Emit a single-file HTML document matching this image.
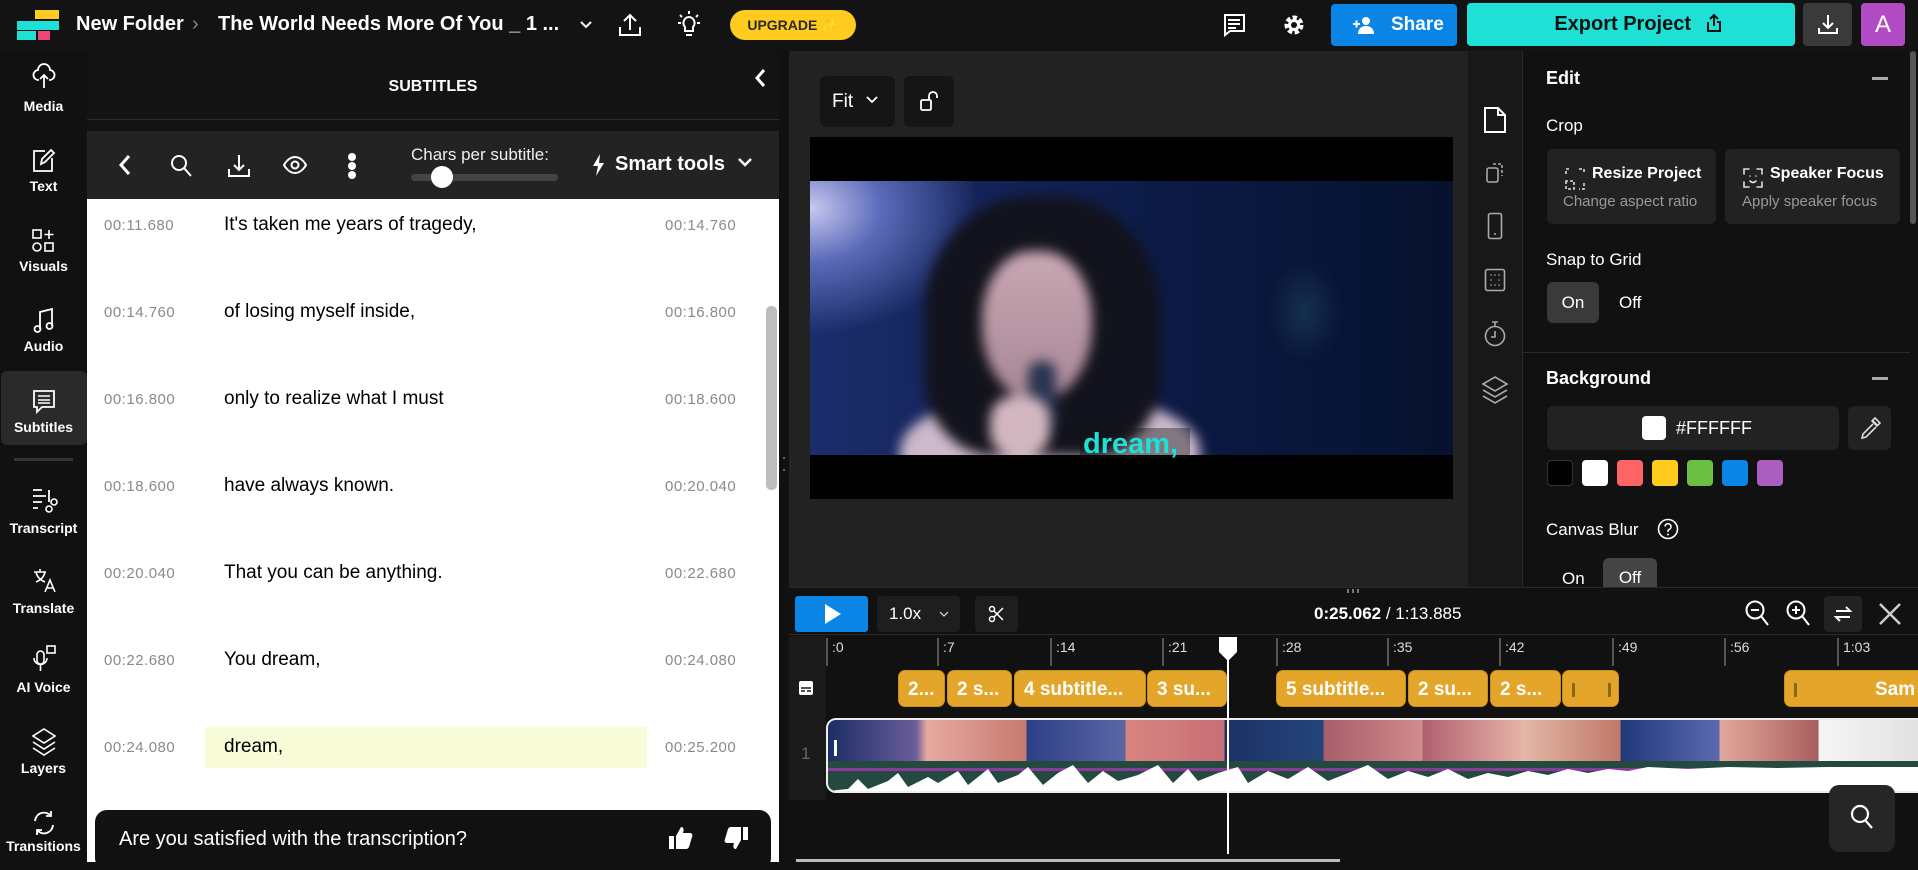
<!DOCTYPE html>
<html><head><meta charset="utf-8"><style>
*{box-sizing:border-box;margin:0;padding:0}
body{width:1918px;height:862px;overflow:hidden;background:#111;font-family:"Liberation Sans",Arial,sans-serif;color:#fff;position:relative}
.a{position:absolute}
.t{position:absolute;white-space:nowrap}
svg{position:absolute;overflow:visible}
.lbl{position:absolute;width:87px;left:0;text-align:center;font-size:14px;font-weight:bold;color:#fff}
.tm{position:absolute;font-size:15px;color:#8a8a8a;letter-spacing:.5px}
.tx{position:absolute;left:224px;font-size:19px;color:#000;font-weight:500}
.clip{position:absolute;top:670px;height:37px;background:#e3a52a;border-radius:7px;color:#fff;font-weight:bold;font-size:19px;line-height:37px;padding-left:9px;overflow:hidden;white-space:nowrap;border:1px solid #c98f1c}
.tick{position:absolute;top:638px;height:28px;border-left:2px solid #555;font-size:14px;color:#ddd;padding-left:4px;line-height:18px}
.sw{position:absolute;top:460px;width:26px;height:26px;border-radius:4px}
</style></head><body>

<!-- TOP BAR -->
<div class="a" style="left:0;top:0;width:1918px;height:51px;background:#131313"></div>
<div class="a" style="left:35px;top:10px;width:24px;height:9px;background:#ffcb1f"></div>
<div class="a" style="left:17px;top:21px;width:42px;height:9px;background:#1ee0d5"></div>
<div class="a" style="left:17px;top:31px;width:19px;height:9px;background:#1ee0d5"></div>
<div class="a" style="left:38px;top:31px;width:12px;height:9px;background:#f0447a"></div>
<div class="t" style="left:76px;top:13px;font-size:20px;font-weight:bold">New Folder</div>
<div class="t" style="left:192px;top:13px;font-size:20px;color:#888">›</div>
<div class="t" style="left:218px;top:13px;font-size:20px;font-weight:bold">The World Needs More Of You _ 1 ...</div>
<svg style="left:579px;top:20px" width="14" height="10"><path d="M2 2l5 5 5-5" stroke="#fff" stroke-width="2" fill="none"/></svg>
<svg style="left:618px;top:12px" width="24" height="26"><path d="M12 18V3M6 9l6-6 6 6M2 15v8h20v-8" stroke="#fff" stroke-width="2" fill="none"/></svg>
<svg style="left:677px;top:11px" width="24" height="28"><path d="M12 6a6 6 0 0 0-4 10v4h8v-4a6 6 0 0 0-4-10zM9 24h6M12 0v3M3 4l2 2M21 4l-2 2M1 12h3M20 12h3" stroke="#fff" stroke-width="2" fill="none"/></svg>
<div class="a" style="left:730px;top:10px;width:126px;height:30px;background:#ffcb1f;border-radius:15px;color:#2a2a2a;font-weight:bold;font-size:14px;line-height:30px;text-align:center">UPGRADE ✨</div>
<svg style="left:1222px;top:13px" width="24" height="24"><path d="M2 2h20v16H8l-5 4V2z" stroke="#fff" stroke-width="2" fill="none"/><path d="M6 7h12M6 11h12M6 15h8" stroke="#fff" stroke-width="2"/></svg>
<svg style="left:1282px;top:13px" width="24" height="24"><circle cx="12" cy="12" r="7" fill="none" stroke="#fff" stroke-width="5" stroke-dasharray="4 2.3"/><circle cx="12" cy="12" r="6" fill="#fff"/><circle cx="12" cy="12" r="3" fill="#131313"/></svg>
<div class="a" style="left:1331px;top:4px;width:126px;height:42px;background:#0a84e5;border-radius:4px;font-size:19px;font-weight:bold;line-height:42px;padding-left:60px">Share</div>
<svg style="left:1352px;top:16px" width="24" height="18"><circle cx="14" cy="5" r="4" fill="#fff"/><path d="M6 18c0-6 4-8 8-8s8 2 8 8z" fill="#fff"/><path d="M1 8h7M4.5 4.5v7" stroke="#fff" stroke-width="2"/></svg>
<div class="a" style="left:1467px;top:3px;width:328px;height:43px;background:#1ee0d5;border-radius:4px;color:#111;font-size:20px;font-weight:bold;line-height:43px;text-align:center">Export Project &nbsp;&nbsp;</div>
<svg style="left:1706px;top:13px" width="16" height="20"><path d="M8 13V2M4 6l4-4 4 4M2 9v9h12V9h-3" stroke="#111" stroke-width="2" fill="none"/></svg>
<div class="a" style="left:1803px;top:3px;width:49px;height:43px;background:#3a3a3a;border-radius:4px"></div>
<svg style="left:1817px;top:13px" width="22" height="22"><path d="M11 2v13M6 10l5 5 5-5M2 15v5h18v-5" stroke="#fff" stroke-width="2" fill="none"/></svg>
<div class="a" style="left:1861px;top:3px;width:44px;height:43px;background:#b04bc4;border-radius:4px;font-size:24px;line-height:43px;text-align:center">A</div>

<!-- LEFT SIDEBAR -->
<div class="a" style="left:0;top:51px;width:87px;height:811px;background:#111"></div>
<div class="a" style="left:1px;top:371px;width:86px;height:74px;background:#2a2a2a;border-radius:6px"></div>
<div class="a" style="left:14px;top:458px;width:59px;height:3px;background:#333"></div>
<svg style="left:33px;top:64px" width="22" height="26"><path d="M6 16a5 5 0 0 1-1-10 6 6 0 0 1 12 0 5 5 0 0 1-1 10M11 24V11M7 15l4-4 4 4" stroke="#fff" stroke-width="1.8" fill="none"/></svg>
<div class="lbl" style="top:98px">Media</div>
<svg style="left:31px;top:148px" width="24" height="26"><path d="M14 3H3v20h18V10M10 16l1-5 9-9 3 3-9 9z" stroke="#fff" stroke-width="1.8" fill="none"/></svg>
<div class="lbl" style="top:178px">Text</div>
<svg style="left:31px;top:228px" width="26" height="26"><rect x="2" y="2" width="8" height="8" stroke="#fff" stroke-width="1.6" fill="none"/><path d="M18 2v9M13.5 6.5h9" stroke="#fff" stroke-width="1.6"/><circle cx="6" cy="19" r="4" stroke="#fff" stroke-width="1.6" fill="none"/><rect x="14" y="15" width="8" height="8" stroke="#fff" stroke-width="1.6" fill="none"/></svg>
<div class="lbl" style="top:258px">Visuals</div>
<svg style="left:33px;top:307px" width="22" height="28"><path d="M7 22V5l12-3v17" stroke="#fff" stroke-width="1.8" fill="none"/><circle cx="4.5" cy="22" r="3" stroke="#fff" stroke-width="1.8" fill="none"/><circle cx="16.5" cy="19" r="3" stroke="#fff" stroke-width="1.8" fill="none"/></svg>
<div class="lbl" style="top:338px">Audio</div>
<svg style="left:32px;top:389px" width="24" height="26"><path d="M2 2h20v16H10l-5 5v-5H2z" stroke="#fff" stroke-width="1.8" fill="none"/><path d="M6 7h12M6 11h12M6 14h12" stroke="#fff" stroke-width="1.6"/></svg>
<div class="lbl" style="top:419px">Subtitles</div>
<svg style="left:31px;top:488px" width="28" height="28"><path d="M2 2h9M2 8h13M2 14h9M2 20h5" stroke="#fff" stroke-width="1.8"/><path d="M18 2v12" stroke="#fff" stroke-width="1.8"/><circle cx="23" cy="14" r="3" stroke="#fff" stroke-width="1.6" fill="none"/><circle cx="18" cy="21" r="3" stroke="#fff" stroke-width="1.6" fill="none"/></svg>
<div class="lbl" style="top:520px">Transcript</div>
<svg style="left:33px;top:568px" width="24" height="26"><path d="M1 4h12M7 1v3M3 4c1 5 4 8 9 10M12 4c-1 5-4 8-9 10" stroke="#fff" stroke-width="1.6" fill="none"/><path d="M12 24l5-12 5 12M14 20h6" stroke="#fff" stroke-width="1.6" fill="none"/></svg>
<div class="lbl" style="top:600px">Translate</div>
<svg style="left:33px;top:645px" width="24" height="28"><rect x="4" y="6" width="7" height="13" rx="3.5" stroke="#fff" stroke-width="1.6" fill="none"/><path d="M1 13a6.5 6.5 0 0 0 13 0M7.5 20v6" stroke="#fff" stroke-width="1.6" fill="none"/><rect x="14" y="1" width="8" height="7" stroke="#fff" stroke-width="1.6" fill="none"/></svg>
<div class="lbl" style="top:679px">AI Voice</div>
<svg style="left:31px;top:727px" width="26" height="30"><path d="M13 2l11 7-11 7L2 9zM2 15l11 7 11-7M2 21l11 7 11-7" stroke="#fff" stroke-width="1.6" fill="none"/></svg>
<div class="lbl" style="top:760px">Layers</div>
<svg style="left:31px;top:810px" width="26" height="26"><path d="M4 11a9 9 0 0 1 16-5M22 15a9 9 0 0 1-16 5M20 1v5h-5M6 25v-5h5" stroke="#fff" stroke-width="1.8" fill="none"/></svg>
<div class="lbl" style="top:838px">Transitions</div>

<!-- SUBTITLES PANEL -->
<div class="a" style="left:87px;top:51px;width:692px;height:80px;background:#131313"></div>
<div class="t" style="left:87px;width:692px;text-align:center;top:78px;font-size:16px;font-weight:bold">SUBTITLES</div>
<svg style="left:754px;top:68px" width="12" height="20"><path d="M10 2L3 10l7 8" stroke="#fff" stroke-width="3" fill="none"/></svg>
<div class="a" style="left:87px;top:119px;width:692px;height:1px;background:#2c2c2c"></div>
<div class="a" style="left:87px;top:131px;width:692px;height:68px;background:#232323"></div>
<svg style="left:118px;top:154px" width="14" height="22"><path d="M11 2L3 11l8 9" stroke="#fff" stroke-width="3" fill="none"/></svg>
<svg style="left:170px;top:154px" width="24" height="24"><circle cx="9" cy="9" r="7" stroke="#fff" stroke-width="2" fill="none"/><path d="M14 14l7 8" stroke="#fff" stroke-width="2"/></svg>
<svg style="left:227px;top:153px" width="24" height="26"><path d="M12 2v15M7 12l5 5 5-5M2 16v7h20v-7" stroke="#fff" stroke-width="2" fill="none"/></svg>
<svg style="left:283px;top:155px" width="24" height="20"><path d="M1 10s4-8 11-8 11 8 11 8-4 8-11 8S1 10 1 10z" stroke="#fff" stroke-width="2" fill="none"/><circle cx="12" cy="10" r="3.5" stroke="#fff" stroke-width="2" fill="none"/></svg>
<div class="a" style="left:348px;top:153px;width:8px;height:8px;border-radius:4px;background:#fff"></div>
<div class="a" style="left:348px;top:162px;width:8px;height:8px;border-radius:4px;background:#fff"></div>
<div class="a" style="left:348px;top:171px;width:8px;height:8px;border-radius:4px;background:#fff"></div>
<div class="t" style="left:411px;top:145px;font-size:17px;color:#eee">Chars per subtitle:</div>
<div class="a" style="left:411px;top:174px;width:147px;height:7px;background:#444;border-radius:4px"></div>
<div class="a" style="left:431px;top:166px;width:22px;height:22px;background:#fff;border-radius:11px"></div>
<svg style="left:591px;top:153px" width="14" height="24"><path d="M9 1L2 13h5l-2 10 8-13H8z" fill="#fff"/></svg>
<div class="t" style="left:615px;top:153px;font-size:20px;font-weight:bold">Smart tools</div>
<svg style="left:737px;top:157px" width="16" height="12"><path d="M2 2l6 6 6-6" stroke="#fff" stroke-width="2.5" fill="none"/></svg>

<div class="a" style="left:87px;top:199px;width:692px;height:663px;background:#fff"></div>
<div class="a" style="left:205px;top:727px;width:442px;height:41px;background:#f9fcd9"></div>
<div class="a" style="left:766px;top:306px;width:11px;height:184px;background:#bdbdbd;border-radius:5px"></div>

<div class="tm" style="left:104px;top:217px">00:11.680</div><div class="tx" style="top:214px">It's taken me years of tragedy,</div><div class="tm" style="left:665px;top:217px">00:14.760</div>
<div class="tm" style="left:104px;top:304px">00:14.760</div><div class="tx" style="top:301px">of losing myself inside,</div><div class="tm" style="left:665px;top:304px">00:16.800</div>
<div class="tm" style="left:104px;top:391px">00:16.800</div><div class="tx" style="top:388px">only to realize what I must</div><div class="tm" style="left:665px;top:391px">00:18.600</div>
<div class="tm" style="left:104px;top:478px">00:18.600</div><div class="tx" style="top:475px">have always known.</div><div class="tm" style="left:665px;top:478px">00:20.040</div>
<div class="tm" style="left:104px;top:565px">00:20.040</div><div class="tx" style="top:562px">That you can be anything.</div><div class="tm" style="left:665px;top:565px">00:22.680</div>
<div class="tm" style="left:104px;top:652px">00:22.680</div><div class="tx" style="top:649px">You dream,</div><div class="tm" style="left:665px;top:652px">00:24.080</div>
<div class="tm" style="left:104px;top:739px">00:24.080</div><div class="tx" style="top:736px">dream,</div><div class="tm" style="left:665px;top:739px">00:25.200</div>

<div class="a" style="left:95px;top:810px;width:676px;height:60px;background:#111;border-radius:12px"></div>
<div class="t" style="left:119px;top:828px;font-size:20px;font-weight:500">Are you satisfied with the transcription?</div>
<svg style="left:668px;top:826px" width="26" height="24"><path d="M1 10h5v13H1zM8 10l5-9c3 0 3 3 2 6h7c2 0 3 2 2 4l-3 10c-1 2-2 2-4 2H8z" fill="#fff"/></svg>
<svg style="left:723px;top:826px" width="26" height="24"><path d="M20 1h5v13h-5zM18 14l-5 9c-3 0-3-3-2-6H4c-2 0-3-2-2-4L5 3c1-2 2-2 4-2h9z" fill="#fff"/></svg>

<!-- DIVIDER -->
<div class="a" style="left:779px;top:51px;width:10px;height:536px;background:#111"></div>
<div class="a" style="left:783px;top:457px;width:2px;height:14px;border-top:2px dotted #666;border-bottom:2px dotted #666"></div>

<!-- PREVIEW -->
<div class="a" style="left:789px;top:51px;width:679px;height:536px;background:#222"></div>
<div class="a" style="left:820px;top:76px;width:75px;height:51px;background:#151515;border-radius:6px;font-size:19px;line-height:51px;padding-left:12px">Fit</div>
<svg style="left:866px;top:96px" width="12" height="8"><path d="M1 1l5 5 5-5" stroke="#fff" stroke-width="1.8" fill="none"/></svg>
<div class="a" style="left:904px;top:76px;width:50px;height:51px;background:#151515;border-radius:6px"></div>
<svg style="left:919px;top:89px" width="22" height="24"><rect x="2" y="11" width="10" height="10" rx="1.5" stroke="#fff" stroke-width="1.8" fill="none"/><path d="M10 11V7a4 4 0 0 1 8 0v2" stroke="#fff" stroke-width="1.8" fill="none"/></svg>

<div class="a" style="left:810px;top:137px;width:643px;height:362px;background:#000"></div>
<div class="a" style="left:810px;top:181px;width:643px;height:274px;overflow:hidden;background:radial-gradient(ellipse 240px 180px at 0% 10%,#c8c9f0 0%,#5a6ab8 30%,rgba(20,35,90,0) 70%),linear-gradient(90deg,#1b2d6b,#0c1a45 55%,#07122e)">
 <div class="a" style="left:0;top:0;width:643px;height:274px;filter:blur(6px)">
  <div class="a" style="left:460px;top:80px;width:70px;height:100px;border-radius:50%;background:radial-gradient(#2f6d7a55,transparent 70%)"></div>
  <div class="a" style="left:90px;top:210px;width:300px;height:120px;border-radius:50% 50% 0 0;background:#cdb9cc"></div>
  <div class="a" style="left:115px;top:15px;width:235px;height:260px;border-radius:45% 45% 30% 30%;background:#12131c"></div>
  <div class="a" style="left:172px;top:70px;width:110px;height:150px;border-radius:45% 45% 50% 50%;background:linear-gradient(#c9a8b4,#a88795)"></div>
  <div class="a" style="left:218px;top:180px;width:28px;height:70px;border-radius:12px;background:#2a3450"></div>
  <div class="a" style="left:180px;top:215px;width:60px;height:60px;border-radius:40%;background:#d3b7c0"></div>
 </div>
</div>
<div class="a" style="left:1080px;top:428px;width:110px;height:30px;background:rgba(20,20,20,.4)"></div>
<div class="t" style="left:1083px;top:428px;font-size:29px;font-weight:bold;color:#1ee0d5">dream,</div>

<!-- RIGHT ICON COLUMN -->
<div class="a" style="left:1468px;top:51px;width:55px;height:536px;background:#181818"></div>
<div class="a" style="left:1522px;top:51px;width:1px;height:536px;background:#2a2a2a"></div>
<svg style="left:1483px;top:106px" width="24" height="28"><path d="M2 2h13l7 7v17H2z M15 2v7h7" stroke="#fff" stroke-width="2" fill="none"/></svg>
<svg style="left:1485px;top:162px" width="20" height="22"><rect x="2" y="6" width="11" height="14" rx="2" stroke="#aaa" stroke-width="1.6" fill="none"/><path d="M8 2h9v12" stroke="#aaa" stroke-width="1.6" stroke-dasharray="3 2" fill="none"/></svg>
<svg style="left:1487px;top:212px" width="16" height="28"><rect x="1.5" y="1.5" width="13" height="25" rx="2" stroke="#aaa" stroke-width="1.6" fill="none"/><circle cx="8" cy="22" r="1" fill="#aaa"/></svg>
<svg style="left:1484px;top:268px" width="22" height="24"><rect x="1.5" y="1.5" width="19" height="21" rx="2" stroke="#aaa" stroke-width="1.6" fill="none"/><path d="M7 7h0M11 7h0M15 7h0M7 12h0M15 12h0M7 17h0M11 17h0M15 17h0" stroke="#aaa" stroke-width="1.6" stroke-linecap="round"/></svg>
<svg style="left:1484px;top:320px" width="22" height="28"><circle cx="11" cy="16" r="9.5" stroke="#aaa" stroke-width="1.6" fill="none"/><path d="M11 2v4M8 2h6M11 11v6H7" stroke="#aaa" stroke-width="1.6" fill="none"/></svg>
<svg style="left:1481px;top:375px" width="28" height="30"><path d="M14 2l12 7-12 7L2 9zM2 15l12 7 12-7M2 21l12 7 12-7" stroke="#aaa" stroke-width="1.6" fill="none"/></svg>

<!-- PROPERTIES -->
<div class="a" style="left:1523px;top:51px;width:395px;height:536px;background:#111"></div>
<div class="a" style="left:1910px;top:51px;width:6px;height:173px;background:#555;border-radius:3px"></div>
<div class="t" style="left:1546px;top:68px;font-size:18px;font-weight:bold">Edit</div>
<div class="a" style="left:1872px;top:77px;width:16px;height:3px;background:#aaa"></div>
<div class="t" style="left:1546px;top:116px;font-size:17px">Crop</div>
<div class="a" style="left:1547px;top:149px;width:169px;height:75px;background:#222;border-radius:6px"></div>
<div class="a" style="left:1725px;top:149px;width:175px;height:75px;background:#222;border-radius:6px"></div>
<svg style="left:1564px;top:167px" width="22" height="24"><path d="M2 7V2h5M15 2h5v5M20 16v6h-5M2 14v8h8v-8z" stroke="#ddd" stroke-width="1.6" fill="none" stroke-dasharray="3 2"/></svg>
<div class="t" style="left:1592px;top:165px;font-size:16px;font-weight:bold">Resize Project</div>
<div class="t" style="left:1563px;top:193px;font-size:15px;color:#999">Change aspect ratio</div>
<svg style="left:1742px;top:167px" width="22" height="22"><path d="M2 7V2h5M15 2h5v5M20 15v5h-5M7 20H2v-5M8 9h0M14 9h0M8 14q3 3 6 0" stroke="#ddd" stroke-width="1.6" fill="none" stroke-linecap="round"/></svg>
<div class="t" style="left:1770px;top:165px;font-size:16px;font-weight:bold">Speaker Focus</div>
<div class="t" style="left:1742px;top:193px;font-size:15px;color:#999">Apply speaker focus</div>
<div class="t" style="left:1546px;top:250px;font-size:17px">Snap to Grid</div>
<div class="a" style="left:1547px;top:282px;width:52px;height:41px;background:#3a3a3a;border-radius:6px;font-size:17px;line-height:41px;text-align:center">On</div>
<div class="t" style="left:1619px;top:293px;font-size:17px">Off</div>
<div class="a" style="left:1523px;top:352px;width:387px;height:1px;background:#2a2a2a"></div>
<div class="t" style="left:1546px;top:368px;font-size:18px;font-weight:bold">Background</div>
<div class="a" style="left:1872px;top:377px;width:16px;height:3px;background:#aaa"></div>
<div class="a" style="left:1547px;top:406px;width:292px;height:44px;background:#222;border-radius:6px"></div>
<div class="a" style="left:1642px;top:416px;width:24px;height:24px;background:#fff;border-radius:4px"></div>
<div class="t" style="left:1676px;top:418px;font-size:18px">#FFFFFF</div>
<div class="a" style="left:1848px;top:406px;width:43px;height:44px;background:#222;border-radius:6px"></div>
<svg style="left:1858px;top:416px" width="24" height="24"><path d="M14 4l6 6M17 2l5 5-3 3-5-5zM15 8L5 18l-1 4 4-1L18 11" stroke="#ddd" stroke-width="1.6" fill="none"/></svg>
<div class="sw" style="left:1547px;background:#000;border:1px solid #333"></div>
<div class="sw" style="left:1582px;background:#fff"></div>
<div class="sw" style="left:1617px;background:#fe6464"></div>
<div class="sw" style="left:1652px;background:#ffcb1f"></div>
<div class="sw" style="left:1687px;background:#6cbf45"></div>
<div class="sw" style="left:1722px;background:#0a84e5"></div>
<div class="sw" style="left:1757px;background:#a95ec0"></div>
<div class="t" style="left:1546px;top:520px;font-size:17px">Canvas Blur</div>
<svg style="left:1657px;top:518px" width="22" height="22"><circle cx="11" cy="11" r="9.5" stroke="#fff" stroke-width="1.6" fill="none"/><path d="M8 8.5a3 3 0 1 1 4 3c-1 .5-1 1-1 2.5" stroke="#fff" stroke-width="1.6" fill="none"/><circle cx="11" cy="16.5" r="1" fill="#fff"/></svg>
<div class="t" style="left:1562px;top:569px;font-size:17px">On</div>
<div class="a" style="left:1603px;top:558px;width:54px;height:29px;background:#444;border-radius:6px 6px 0 0;font-size:17px;line-height:40px;text-align:center">Off</div>

<!-- TIMELINE -->
<div class="a" style="left:789px;top:587px;width:1129px;height:275px;background:#111;border-top:1px solid #2a2a2a"></div>
<div class="a" style="left:1347px;top:589px;width:12px;height:4px;border-left:2px solid #777;border-right:2px solid #777"><div style="margin-left:3px;width:2px;height:4px;background:#777"></div></div>
<div class="a" style="left:795px;top:596px;width:73px;height:36px;background:#0a84e5;border-radius:3px"></div>
<svg style="left:824px;top:603px" width="18" height="22"><path d="M1 1l16 10L1 21z" fill="#fff"/></svg>
<div class="a" style="left:877px;top:596px;width:83px;height:36px;background:#1e1e1e;border-radius:4px;font-size:17px;line-height:36px;padding-left:12px">1.0x</div>
<svg style="left:939px;top:611px" width="10" height="7"><path d="M1 1l4 4 4-4" stroke="#ccc" stroke-width="1.3" fill="none"/></svg>
<div class="a" style="left:975px;top:596px;width:43px;height:36px;background:#1e1e1e;border-radius:4px"></div>
<svg style="left:988px;top:605px" width="16" height="18"><circle cx="4" cy="4" r="2.5" stroke="#fff" stroke-width="1.5" fill="none"/><circle cx="4" cy="14" r="2.5" stroke="#fff" stroke-width="1.5" fill="none"/><path d="M6 6l9 9M6 12l9-9" stroke="#fff" stroke-width="1.5"/></svg>
<div class="t" style="left:1314px;top:604px;font-size:17px"><b>0:25.062</b> / 1:13.885</div>
<svg style="left:1745px;top:600px" width="26" height="28"><circle cx="10" cy="10" r="8.5" stroke="#fff" stroke-width="2" fill="none"/><path d="M6 10h8M16 16l7 9" stroke="#fff" stroke-width="2"/></svg>
<svg style="left:1786px;top:600px" width="26" height="28"><circle cx="10" cy="10" r="8.5" stroke="#fff" stroke-width="2" fill="none"/><path d="M6 10h8M10 6v8M16 16l7 9" stroke="#fff" stroke-width="2"/></svg>
<div class="a" style="left:1824px;top:596px;width:38px;height:36px;background:#222;border-radius:4px"></div>
<svg style="left:1832px;top:605px" width="22" height="18"><path d="M4 6h14l-4-4M18 12H4l4 4" stroke="#fff" stroke-width="2" fill="none"/></svg>
<svg style="left:1878px;top:602px" width="24" height="24"><path d="M2 2l20 20M22 2L2 22" stroke="#ccc" stroke-width="2.5"/></svg>
<div class="a" style="left:789px;top:634px;width:1129px;height:1px;background:#2a2a2a"></div>

<div class="a" style="left:789px;top:636px;width:37px;height:164px;background:#1a1a1a"></div>
<div class="tick" style="left:826px">:0</div>
<div class="tick" style="left:937px">:7</div>
<div class="tick" style="left:1050px">:14</div>
<div class="tick" style="left:1162px">:21</div>
<div class="tick" style="left:1276px">:28</div>
<div class="tick" style="left:1387px">:35</div>
<div class="tick" style="left:1499px">:42</div>
<div class="tick" style="left:1612px">:49</div>
<div class="tick" style="left:1724px">:56</div>
<div class="tick" style="left:1837px">1:03</div>

<svg style="left:798px;top:680px" width="16" height="16"><rect x="1" y="1" width="14" height="14" rx="2" fill="#fff"/><path d="M3 8h10M3 11h4M9 11h4" stroke="#1a1a1a" stroke-width="1.5"/></svg>
<div class="clip" style="left:898px;width:47px">2...</div>
<div class="clip" style="left:947px;width:65px">2 s...</div>
<div class="clip" style="left:1014px;width:132px">4 subtitle...</div>
<div class="clip" style="left:1147px;width:80px">3 su...</div>
<div class="clip" style="left:1276px;width:130px">5 subtitle...</div>
<div class="clip" style="left:1408px;width:80px">2 su...</div>
<div class="clip" style="left:1490px;width:71px">2 s...</div>
<div class="clip" style="left:1562px;width:57px;padding-left:0"><span style="position:absolute;left:9px;top:12px;width:3px;height:14px;background:#8a6a10"></span><span style="position:absolute;left:45px;top:12px;width:3px;height:14px;background:#8a6a10"></span></div>
<div class="clip" style="left:1784px;width:150px;padding-left:90px">Sam<span style="position:absolute;left:9px;top:12px;width:3px;height:14px;background:#8a6a10"></span></div>

<div class="a" style="left:826px;top:718px;width:1100px;height:75px;border:2px solid #eee;border-radius:10px 0 0 10px;overflow:hidden;background:#244a40">
  <div class="a" style="left:0;top:0;width:1100px;height:41px;background:linear-gradient(90deg,#1c2d66 0,#6a5d9a 8%,#e6a9a0 9%,#c77a70 18%,#2d3f85 18.1%,#5b66a6 27%,#d9857f 27.1%,#c66f77 36%,#1d3166 36.1%,#23457a 45%,#a85e6a 45.1%,#d08b8c 54%,#b06070 54.1%,#e6b2a6 63%,#e3b8a7 63.1%,#c07868 72%,#22387a 72.1%,#5b6ab0 81%,#e3a89a 81.1%,#a75e5e 90%,#f5f5f5 90.1%,#e0e0e0 100%)"></div>
  <div class="a" style="left:0;top:48px;width:1100px;height:3px;background:#8a3a9a"></div>
  <svg style="left:0;top:41px" width="1100" height="34"><path d="M0 34 L0 30 L20 28 L30 18 L40 28 L60 20 L70 12 L80 26 L100 16 L110 22 L130 10 L140 24 L160 8 L170 22 L190 14 L200 6 L215 24 L230 12 L245 4 L260 22 L275 10 L290 20 L310 14 L330 4 L345 22 L360 8 L370 20 L390 12 L410 6 L420 22 L440 10 L460 18 L480 6 L500 20 L520 12 L540 4 L560 18 L580 10 L600 16 L620 8 L640 18 L660 12 L680 16 L700 10 L720 14 L740 8 L760 12 L780 8 L800 10 L820 6 L860 8 L900 6 L950 7 L1000 6 L1100 6 L1100 34 Z" fill="#fff"/></svg>
  <div class="a" style="left:6px;top:20px;width:3px;height:16px;background:#fff"></div>
</div>
<div class="t" style="left:801px;top:744px;font-size:17px;color:#666">1</div>

<div class="a" style="left:1227px;top:660px;width:2px;height:194px;background:#fff"></div>
<svg style="left:1218px;top:636px" width="20" height="26"><path d="M1 1h18v15l-9 9-9-9z" fill="#fff"/></svg>

<div class="a" style="left:1829px;top:785px;width:66px;height:67px;background:#262626;border-radius:10px"></div>
<svg style="left:1849px;top:803px" width="28" height="30"><circle cx="11" cy="11" r="8" stroke="#fff" stroke-width="2.2" fill="none"/><path d="M16 17l7 8" stroke="#fff" stroke-width="2.2"/></svg>
<div class="a" style="left:796px;top:859px;width:544px;height:3px;background:#bbb"></div>
</body></html>
